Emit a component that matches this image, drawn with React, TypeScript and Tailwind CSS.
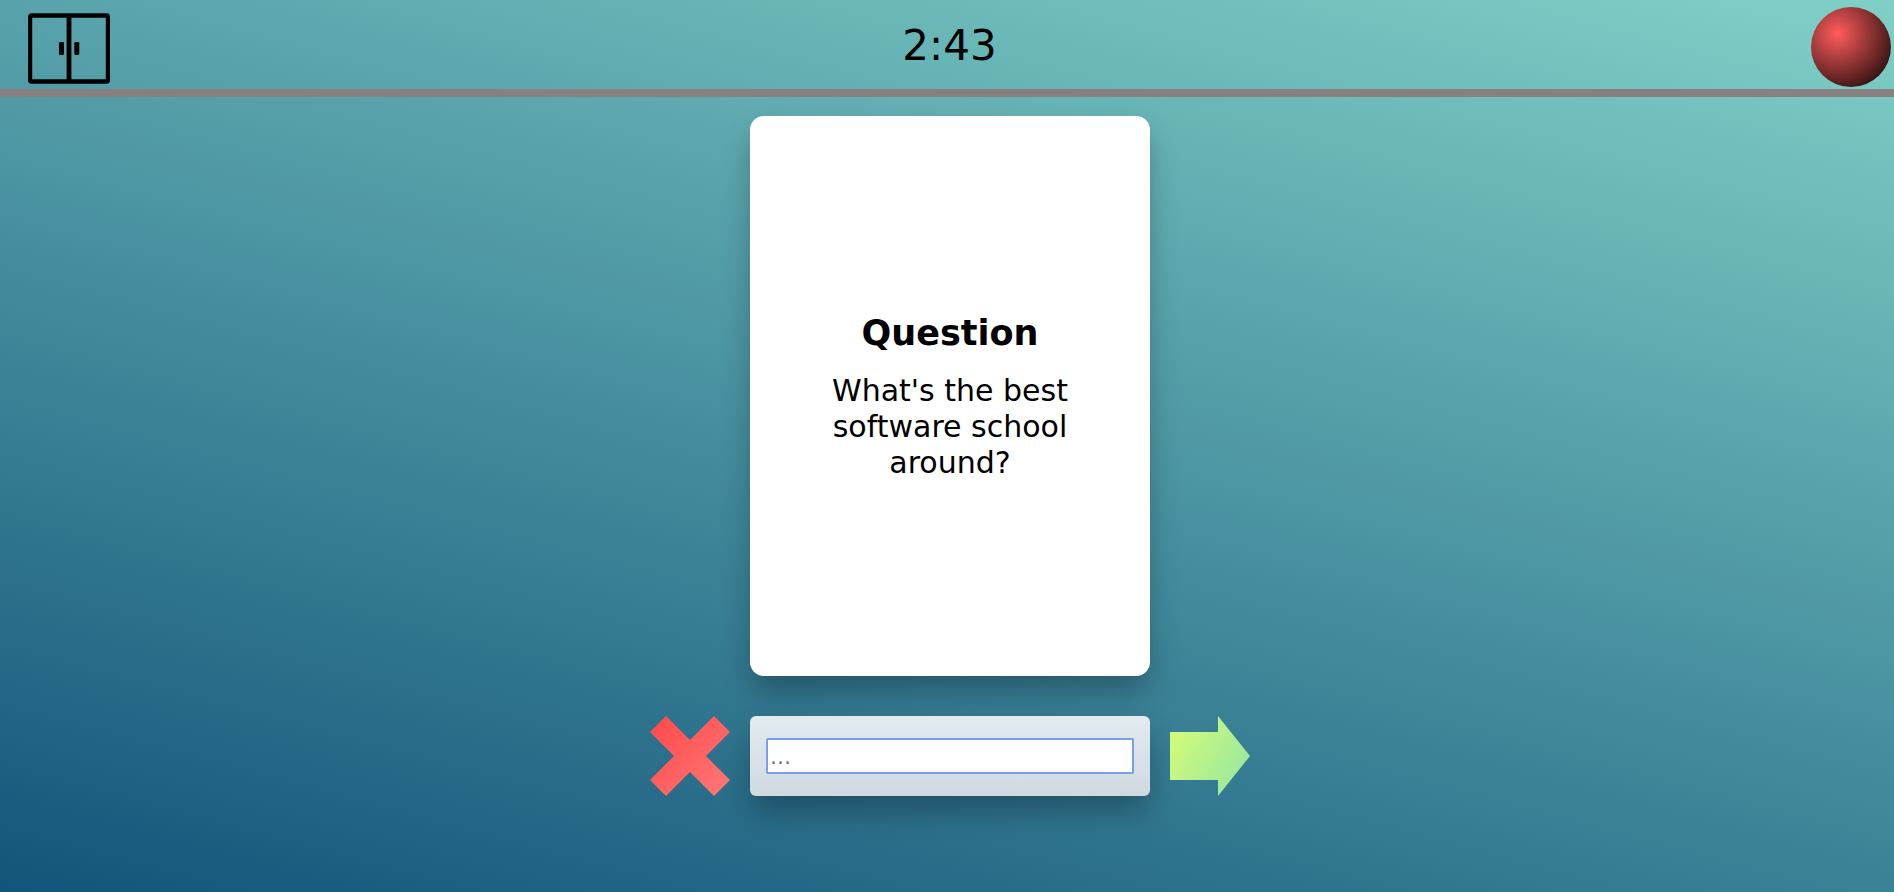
import React, { useState } from "react";

function CabinetIcon() {
  return (
    <svg width="82" height="71" viewBox="0 0 82 71" aria-hidden="true">
      <rect x="2" y="2.5" width="78" height="66" rx="1.5" fill="none" stroke="#000" strokeWidth="4.4" />
      <path d="M41 2v67" stroke="#000" strokeWidth="4.8" />
      <rect x="31" y="29" width="5" height="13" rx="1.2" />
      <rect x="46.3" y="29" width="5" height="13" rx="1.2" />
    </svg>
  );
}

function CrossIcon() {
  return (
    <svg width="80" height="80" viewBox="0 0 100 100" aria-hidden="true">
      <defs>
        <linearGradient id="cross" x1="0" y1="0" x2="1" y2="1">
          <stop offset="0" stopColor="#ff4848" />
          <stop offset="1" stopColor="#ff7878" />
        </linearGradient>
      </defs>
      <path
        d="M20 0 0 20 30 50 0 80 20 100 50 70 80 100 100 80 70 50 100 20 80 0 50 30Z"
        fill="url(#cross)"
      />
    </svg>
  );
}

function ArrowIcon() {
  return (
    <svg width="80" height="80" viewBox="0 0 100 100" aria-hidden="true">
      <defs>
        <linearGradient id="arrow" x1="0" y1="0.2" x2="1" y2="0.8">
          <stop offset="0" stopColor="#d4fc79" />
          <stop offset="1" stopColor="#96e6a1" />
        </linearGradient>
      </defs>
      <path d="M0 20H60V0L100 50 60 100V80H0Z" fill="url(#arrow)" />
    </svg>
  );
}

export default function App() {
  const [answer, setAnswer] = useState("");

  return (
    <div className="flex min-h-screen flex-col bg-[linear-gradient(15deg,#13547a_0%,#80d0c7_100%)] font-['DejaVu_Sans',sans-serif] text-black">
      <header className="grid h-[97px] grid-cols-3 items-center border-b-8 border-[#888080] pr-[3px] pl-2">
        <button type="button" aria-label="Leave" className="mt-2 ml-5 justify-self-start">
          <CabinetIcon />
        </button>
        <time className="justify-self-center pt-0.5 text-[42px] leading-[52px]">2:43</time>
        <button
          type="button"
          aria-label="Record"
          className="mt-1 size-20 justify-self-end rounded-full bg-[radial-gradient(circle_at_33%_33%,#ff5c5c,#000)]"
        />
      </header>

      <main className="flex flex-col items-center gap-10 pt-[19px] pr-4 pb-8 pl-[22px]">
        <article className="flex h-[560px] w-full max-w-[400px] flex-col items-center justify-center gap-[18px] rounded-[14px] bg-white px-16 text-center shadow-[0_17px_30px_-3px_rgba(0,0,0,0.3)]">
          <h1 className="text-[35px] leading-[44px] font-bold">Question</h1>
          <p className="text-[30px] leading-9">What's the best software school around?</p>
        </article>

        <form className="flex w-full max-w-[600px] items-center gap-5" onSubmit={(e) => e.preventDefault()}>
          <button type="button" aria-label="Clear" className="shrink-0" onClick={() => setAnswer("")}>
            <CrossIcon />
          </button>
          <div className="flex h-20 min-w-0 flex-1 items-center rounded-md bg-linear-to-t from-[#cfd9df] to-[#e2ebf0] px-4 shadow-[0_17px_30px_-3px_rgba(0,0,0,0.3)]">
            <input
              type="text"
              aria-label="Answer"
              placeholder="..."
              value={answer}
              onChange={(e) => setAnswer(e.target.value)}
              className="h-9 w-full rounded-xs border-2 border-[#7a9eea] bg-white px-0.5 text-[22px] leading-7 outline-none placeholder:text-[#757575]"
            />
          </div>
          <button type="submit" aria-label="Next" className="shrink-0">
            <ArrowIcon />
          </button>
        </form>
      </main>
    </div>
  );
}
